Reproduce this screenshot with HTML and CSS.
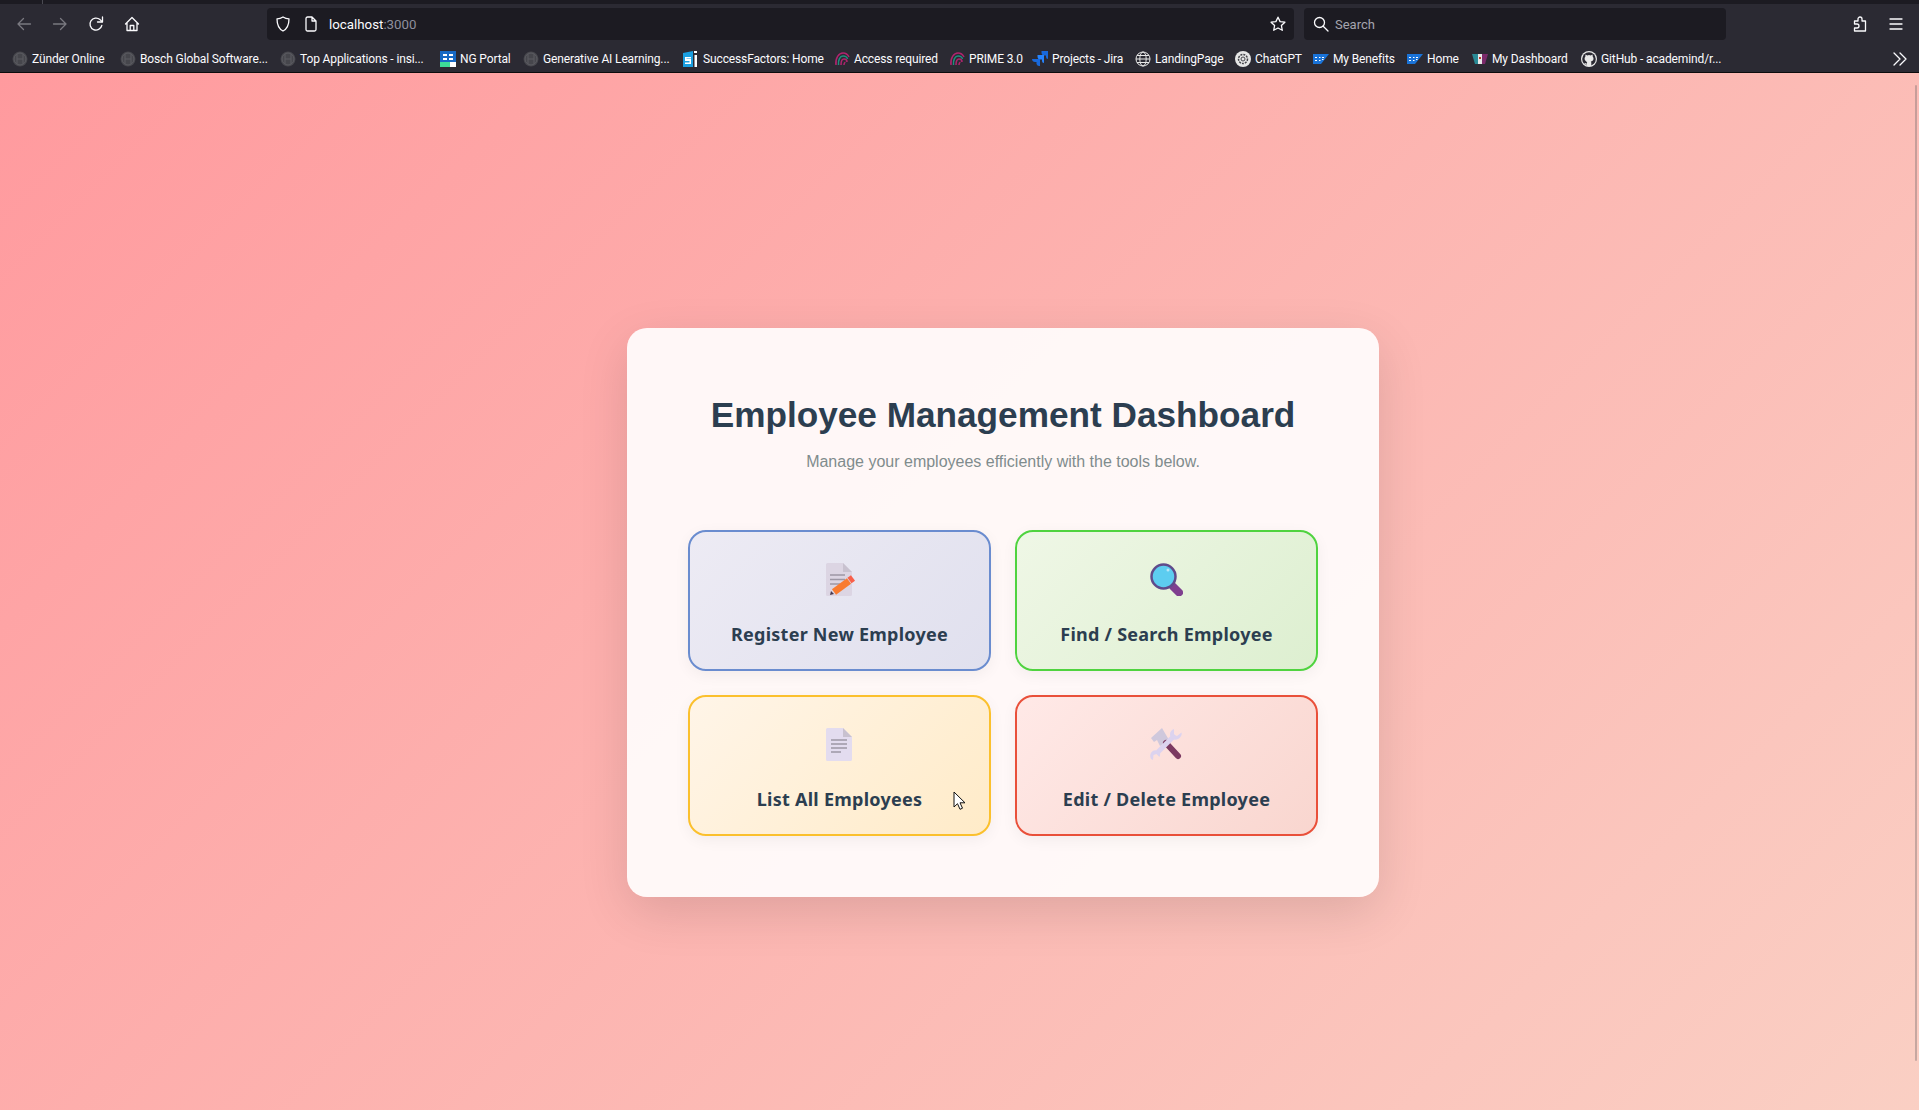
FILE: index.html
```html
<!DOCTYPE html>
<html lang="en">
<head>
<meta charset="utf-8">
<title>Employee Management Dashboard</title>
<link rel="stylesheet" href="styles.css">
</head>
<body>
<svg class="defs" width="0" height="0" aria-hidden="true">
  <defs>
    <symbol id="bosch" viewBox="0 0 16 16">
      <circle cx="8" cy="8" r="7.5" fill="#46464c"/>
      <circle cx="8" cy="8" r="6" fill="none" stroke="#5c5c62"/>
      <path d="M5 3v10M11 3v10M5 8h6" stroke="#5c5c62" fill="none"/>
    </symbol>
    <symbol id="print" viewBox="0 0 16 16">
      <path d="M2 14C1 7 5 2 9 2c3 0 5 2 6 4" fill="none" stroke="#b0246e" stroke-width="1.5"/>
      <path d="M4.500 14C4 9 6 5 9 5c2 0 4 1 4.500 3" fill="none" stroke="#1f8f7f" stroke-width="1.5"/>
      <path d="M7 14c0-4 1-6 3-6 1.500 0 3 1 3 3" fill="none" stroke="#b0246e" stroke-width="1.500"/>
      <path d="M10 14c0-1 .5-3 1.500-2.500" fill="none" stroke="#b0246e" stroke-width="1.500"/>
    </symbol>
    <symbol id="sap" viewBox="0 0 16 16">
      <path d="M0 3h16L8 13H0z" fill="#1a73d8"/>
      <path d="M2 6.500h2M2 9.500h2M6 6.500h1.500M6 9.500h1.500M9 6.500h2M9 8.500h1.500" stroke="#fff" stroke-width="1.100"/>
    </symbol>
    <symbol id="doc-fold" viewBox="0 0 33 33">
      <path d="M3 1.500a1.500 1.500 0 0 1 1.500-1.500H20l9 9v22.500a1.500 1.500 0 0 1-1.500 1.500h-23A1.500 1.500 0 0 1 3 31.500z"/>
      <path d="M20 0l9 9h-9z" fill="#c8c1cf"/>
    </symbol>
  </defs>
</svg>

<header class="browser">
  <div class="tabstrip"><span class="tab-edge"></span></div>
  <div class="navbar">
    <div class="nav-group">
      <button class="tool dim" aria-label="Back"><svg class="ico" viewBox="0 0 16 16"><path d="M14.500 8H2M7.500 2.500 2 8l5.500 5.500"/></svg></button>
      <button class="tool dim" aria-label="Forward"><svg class="ico" viewBox="0 0 16 16"><path d="M1.500 8H14M8.500 2.500 14 8l-5.500 5.500"/></svg></button>
      <button class="tool" aria-label="Reload"><svg class="ico" viewBox="0 0 16 16"><path d="M13.800 9.500A6 6 0 1 1 12 3.600L14 5.500"/><path d="M14.500 1v5h-5"/></svg></button>
      <button class="tool" aria-label="Home"><svg class="ico" viewBox="0 0 16 16"><path d="M1.500 8 8 1.500 14.500 8M3 6.800V14.500h10V6.800M6.200 14.500V9.500h3.600v5"/></svg></button>
    </div>
    <div class="urlbar">
      <svg class="ico shield" viewBox="0 0 16 16"><path d="M8 1C6 2.300 4 2.800 2 2.800c0 5 .8 9.700 6 12.200 5.200-2.500 6-7.200 6-12.200-2 0-4-.5-6-1.800z"/></svg>
      <svg class="ico" viewBox="0 0 16 16"><path d="M3 2.500A1.500 1.500 0 0 1 4.500 1H9l4 4v8.500a1.500 1.500 0 0 1-1.500 1.500h-7A1.500 1.500 0 0 1 3 13.500zM9 1v4h4"/></svg>
      <span class="url">localhost<span class="url-port">:3000</span></span>
      <svg class="ico star" viewBox="0 0 16 16"><path d="M8 1.200l2.100 4.400 4.800.6-3.500 3.300.9 4.800L8 12l-4.300 2.300.9-4.800L1.100 6.200l4.800-.6z"/></svg>
    </div>
    <div class="searchbar">
      <svg class="ico" viewBox="0 0 16 16"><circle cx="6.500" cy="6.500" r="5"/><path d="M10.200 10.200 15 15"/></svg>
      <span class="search-text">Search</span>
    </div>
    <div class="nav-end">
      <button class="tool" aria-label="Extensions"><svg class="ico" viewBox="0 0 16 16"><path d="M2.500 5H6V3a2 2 0 0 1 4 0v2h3.500v10H2.500v-3H5a2 2 0 0 0 0-4H2.500z"/></svg></button>
      <button class="tool" aria-label="Menu"><svg class="ico" viewBox="0 0 16 16"><path d="M2 3h12M2 8h12M2 13h12"/></svg></button>
    </div>
  </div>
  <nav class="bookmarks">
    <a class="bm"><svg class="fav"><use href="#bosch"/></svg>Zünder Online</a>
    <a class="bm"><svg class="fav"><use href="#bosch"/></svg>Bosch Global Software...</a>
    <a class="bm"><svg class="fav"><use href="#bosch"/></svg>Top Applications - insi...</a>
    <a class="bm"><svg class="fav" viewBox="0 0 16 16"><path fill="#1769c4" d="M0 0h16v11H0z"/><path fill="#3ddc97" d="M0 11h10v5H0z"/><path fill="#fff" d="M10 11h6v5h-6zM3 3h4v2H3zM9 3h4v2H9zM3 7h4v2H3zM9 7h4v2H9z"/></svg>NG Portal</a>
    <a class="bm"><svg class="fav"><use href="#bosch"/></svg>Generative AI Learning...</a>
    <a class="bm"><svg class="fav" viewBox="0 0 16 16"><path fill="#1a9fe0" d="M0 2l10-2v16H0z"/><path fill="#fff" d="M2 6h6v1.500H3.500V8H8v5H2v-1.500h4.500V10H2zM11 0h3v2h-3zM11.500 4H14v12h-2.500z"/></svg>SuccessFactors: Home</a>
    <a class="bm"><svg class="fav"><use href="#print"/></svg>Access required</a>
    <a class="bm"><svg class="fav"><use href="#print"/></svg>PRIME 3.0</a>
    <a class="bm"><svg class="fav" viewBox="0 0 16 16"><path fill="#1868db" d="M16 0H9.500v1.500a3 3 0 0 0 3 3H14V6a2 2 0 0 0 2 2z"/><path fill="#2684ff" d="M12 4H5.500v1.500a3 3 0 0 0 3 3H10V10a2 2 0 0 0 2 2z"/><path fill="#1868db" d="M8 8H0c0 2 1.500 3 3 3h1.500v2a3 3 0 0 0 3.500 2z"/></svg>Projects - Jira</a>
    <a class="bm"><svg class="fav globe" viewBox="0 0 16 16"><circle cx="8" cy="8" r="7"/><ellipse cx="8" cy="8" rx="3.200" ry="7"/><path d="M1 8h14M2 4.500h12M2 11.500h12"/></svg>LandingPage</a>
    <a class="bm"><svg class="fav" viewBox="0 0 16 16"><circle cx="8" cy="8" r="8" fill="#e6e6e6"/><circle cx="8" cy="8" r="4.500" fill="none" stroke="#44444a" stroke-width="1.500" stroke-dasharray="2 1"/><circle cx="8" cy="8" r="2" fill="none" stroke="#44444a"/></svg>ChatGPT</a>
    <a class="bm"><svg class="fav"><use href="#sap"/></svg>My Benefits</a>
    <a class="bm"><svg class="fav"><use href="#sap"/></svg>Home</a>
    <a class="bm"><svg class="fav" viewBox="0 0 16 16"><path fill="#2a8a96" d="M0 3h6v10H3z"/><path fill="#e8e8e8" d="M6 3h4v10H6z"/><path fill="#7a2a6a" d="M10 3h6l-3 10h-3z"/><path fill="#c0392b" d="M7 6h2v2H7z"/></svg>My Dashboard</a>
    <a class="bm"><svg class="fav" viewBox="0 0 16 16"><circle cx="8" cy="8" r="8" fill="#e8e8e8"/><circle cx="8" cy="8" r="6.800" fill="#2b2a33"/><path fill="#e8e8e8" d="M4.500 3.500l1.800.9a5 5 0 0 1 3.400 0l1.800-.9.300 2.200c.6.700.8 1.500.7 2.300-.2 1.500-1.300 2.200-2.700 2.400.4.400.5.800.5 1.500v3.100H5.700v-1.400c-1.500.3-2-.5-2.400-1.400l1.100-.1c.3.500.7.800 1.300.6 0-.5.200-.9.500-1.300C4.900 10 3.800 9.300 3.600 8c-.1-.8.100-1.600.7-2.300z"/></svg>GitHub - academind/r...</a>
    <svg class="ico more" viewBox="0 0 16 16"><path d="M2 2l6 6-6 6M8 2l6 6-6 6"/></svg>
  </nav>
</header>

<main class="page">
  <section class="card">
    <h1 class="title">Employee Management Dashboard</h1>
    <p class="subtitle">Manage your employees efficiently with the tools below.</p>
    <div class="actions">
      <a class="action action-blue">
        <svg class="emoji" viewBox="0 0 33 33">
          <use href="#doc-fold" class="doc-dim"/>
          <path class="doc-lines" d="M7 12h15M7 16.500h15M7 21h10"/>
          <path class="pencil-body" d="M11 29 26 18"/>
          <path class="pencil-tip" d="M7 32l1-4 3 3z"/>
          <path class="pencil-end" d="M26.500 17.500 30 15"/>
        </svg>
        <span class="action-label">Register New Employee</span>
      </a>
      <a class="action action-green">
        <svg class="emoji" viewBox="0 0 33 33">
          <path class="lens-handle" d="M23 23.500 29 29.500"/>
          <circle class="lens" cx="13.500" cy="13.500" r="12"/>
          <circle class="lens-shine" cx="18" cy="7" r="1.500"/>
        </svg>
        <span class="action-label">Find / Search Employee</span>
      </a>
      <a class="action action-yellow">
        <svg class="emoji" viewBox="0 0 33 33">
          <use href="#doc-fold" class="doc-light"/>
          <path class="doc-lines" d="M8 12h16M8 16h16M8 20h16M8 24h10"/>
        </svg>
        <span class="action-label">List All Employees</span>
      </a>
      <a class="action action-red">
        <svg class="emoji" viewBox="0 0 33 33">
          <path class="tool-head" d="M1 10 12 0l7 12-9 6-3-6-3 2z"/>
          <path class="tool-handle" d="M16 15 28 28"/>
          <path class="tool-wrench" d="M25 7 8 24"/>
          <path class="tool-jaw" d="M24 1c-3 1-5 4-3.500 7.500s6 4 8.500 2 3-4 2.500-6L27 8l-3-1zM3 32c-2-.5-3.500-3-2.500-6s4.500-5 8-3c2 1.500 2 4 1 6l-3-3-3 1z"/>
        </svg>
        <span class="action-label">Edit / Delete Employee</span>
      </a>
    </div>
  </section>
</main>

<span class="scroll-thumb"></span>
<svg class="cursor" viewBox="0 0 13 19"><path d="M1 1v15l3.500-3.300 2.500 5.600 2.500-1.100-2.500-5.400h5z"/></svg>
</body>
</html>
```

FILE: styles.css
```css
* { box-sizing: border-box; }

html, body {
  margin: 0;
  height: 1110px;
  overflow: hidden;
}

body {
  position: relative;
  font-family: "Liberation Sans", Arial, sans-serif;
  color: #2c3e50;
}

.defs { position: absolute; }

/* Browser chrome */
.browser {
  background: #2b2a33;
  color: #fbfbfe;
  font-family: Roboto, "Noto Sans", sans-serif;
  border-bottom: 1px solid #0c0c0d;
  height: 73px;
}

.tabstrip {
  height: 4px;
  background: #1c1b22;
  padding-left: 42px;
}

.tab-edge {
  display: block;
  width: 1px;
  height: 4px;
  background: #4a4a52;
}

.navbar {
  height: 40px;
  padding: 4px 0 0 6px;
  display: flex;
  align-items: flex-start;
}

.nav-group, .nav-end { display: flex; }

.nav-group { margin-right: 117px; }

.nav-end { margin-left: auto; padding-right: 5px; }

.tool {
  width: 36px;
  height: 32px;
  padding: 0;
  border: 0;
  background: none;
  display: flex;
  align-items: center;
  justify-content: center;
  color: #fbfbfe;
}

.tool.dim { color: #7a7980; }

.ico {
  width: 16px;
  height: 16px;
  fill: none;
  stroke: currentColor;
  stroke-width: 1.300;
  stroke-linecap: round;
  stroke-linejoin: round;
  flex: none;
}

.urlbar, .searchbar {
  height: 32px;
  background: #1c1b22;
  border-radius: 4px;
  display: flex;
  align-items: center;
}

.urlbar {
  width: 1027px;
  padding: 0 8px;
  font-size: 13.3px;
}

.shield { margin-right: 12px; }

.url { margin-left: 10px; }

.url-port { color: #8f8f9d; }

.star { margin-left: auto; }

.searchbar {
  width: 422px;
  margin-left: 10px;
  padding-left: 9px;
  font-size: 13px;
}

.search-text { margin-left: 6px; color: #a5a5ae; }

.bookmarks {
  height: 28px;
  display: grid;
  grid-template-columns: 108px 160px 160px 83px 160px 151px 115px 83px 103px 100px 78px 94px 65px 109px 1fr auto;
  align-items: center;
  padding: 1px 11px 0 12px;
  font-size: 12px;
  letter-spacing: -0.13px;
}

.bm {
  display: flex;
  align-items: center;
  gap: 4px;
  white-space: nowrap;
}

.fav {
  width: 16px;
  height: 16px;
  flex: none;
}

.globe {
  fill: none;
  stroke: #e8e8e8;
  stroke-width: 1;
}

.more { grid-column: 16; }

/* Page */
.page {
  height: 1079px;
  padding-left: 87px;
  background: linear-gradient(135deg, #ff9a9e 0%, #fad0c4 100%);
  display: flex;
  align-items: center;
  justify-content: center;
}

.card {
  width: 752px;
  padding: 60px 61px 61px;
  background: rgba(255, 255, 255, 0.9);
  border-radius: 20px;
  box-shadow: 0 15px 50px rgba(0, 0, 0, 0.12);
  text-align: center;
}

.title {
  margin: 0 0 8px;
  font-size: 35.2px;
  line-height: 54px;
  font-weight: 700;
  color: #2c3e50;
  white-space: nowrap;
}

.subtitle {
  margin: 0 0 56px;
  font-size: 16px;
  line-height: 24px;
  color: #7f8c8d;
}

.actions {
  display: grid;
  grid-template-columns: 1fr 1fr;
  gap: 24px;
}

.action {
  height: 141px;
  padding-top: 31px;
  border: 2px solid;
  border-radius: 18px;
  display: flex;
  flex-direction: column;
  align-items: center;
  box-shadow: 0 4px 15px rgba(0, 0, 0, 0.05);
}

.action-blue { border-color: #6a8ccf; background: linear-gradient(135deg, #edebf4, #e0e0ee); }
.action-green { border-color: #4fd33f; background: linear-gradient(135deg, #eff7e6, #ddefd0); }
.action-yellow { border-color: #fbc02d; background: linear-gradient(135deg, #fff5e8, #ffebc8); }
.action-red { border-color: #e9503a; background: linear-gradient(135deg, #ffe9e7, #f9d6cf); }

.emoji {
  width: 33px;
  height: 33px;
  margin-bottom: 25px;
  flex: none;
}

.action-label {
  font-family: "Noto Sans", sans-serif;
  font-size: 18px;
  line-height: 27px;
  font-weight: 700;
  letter-spacing: 0.25px;
  color: #2c3e50;
}

.doc-dim { fill: #dcd5e3; }
.doc-light { fill: #e3dcef; }

.doc-lines {
  fill: none;
  stroke: #9d97a5;
  stroke-width: 1.500;
}

.pencil-body { stroke: #f97b30; stroke-width: 7; fill: none; }
.pencil-tip { fill: #4a3a50; }
.pencil-end { stroke: #f8604a; stroke-width: 7; fill: none; }

.lens { fill: #5dcdf0; stroke: #5f4b8b; stroke-width: 2.500; }
.lens-handle { stroke: #7f3f8f; stroke-width: 8; stroke-linecap: round; fill: none; }
.lens-shine { fill: #b8e8f8; }

.tool-handle { stroke: #7c3a62; stroke-width: 6; stroke-linecap: round; fill: none; }
.tool-head { fill: #cfc8dc; }
.tool-wrench { stroke: #dcd3ef; stroke-width: 5; fill: none; }
.tool-jaw { fill: #dcd3ef; }

/* Overlays */
.scroll-thumb {
  position: absolute;
  top: 85px;
  right: 2px;
  width: 2px;
  height: 976px;
  background: rgba(120, 110, 110, 0.4);
  border-radius: 1px;
}

.cursor {
  position: absolute;
  left: 953px;
  top: 791px;
  width: 13px;
  height: 19px;
  fill: #fff;
  stroke: #111;
  stroke-width: 1;
}
```
